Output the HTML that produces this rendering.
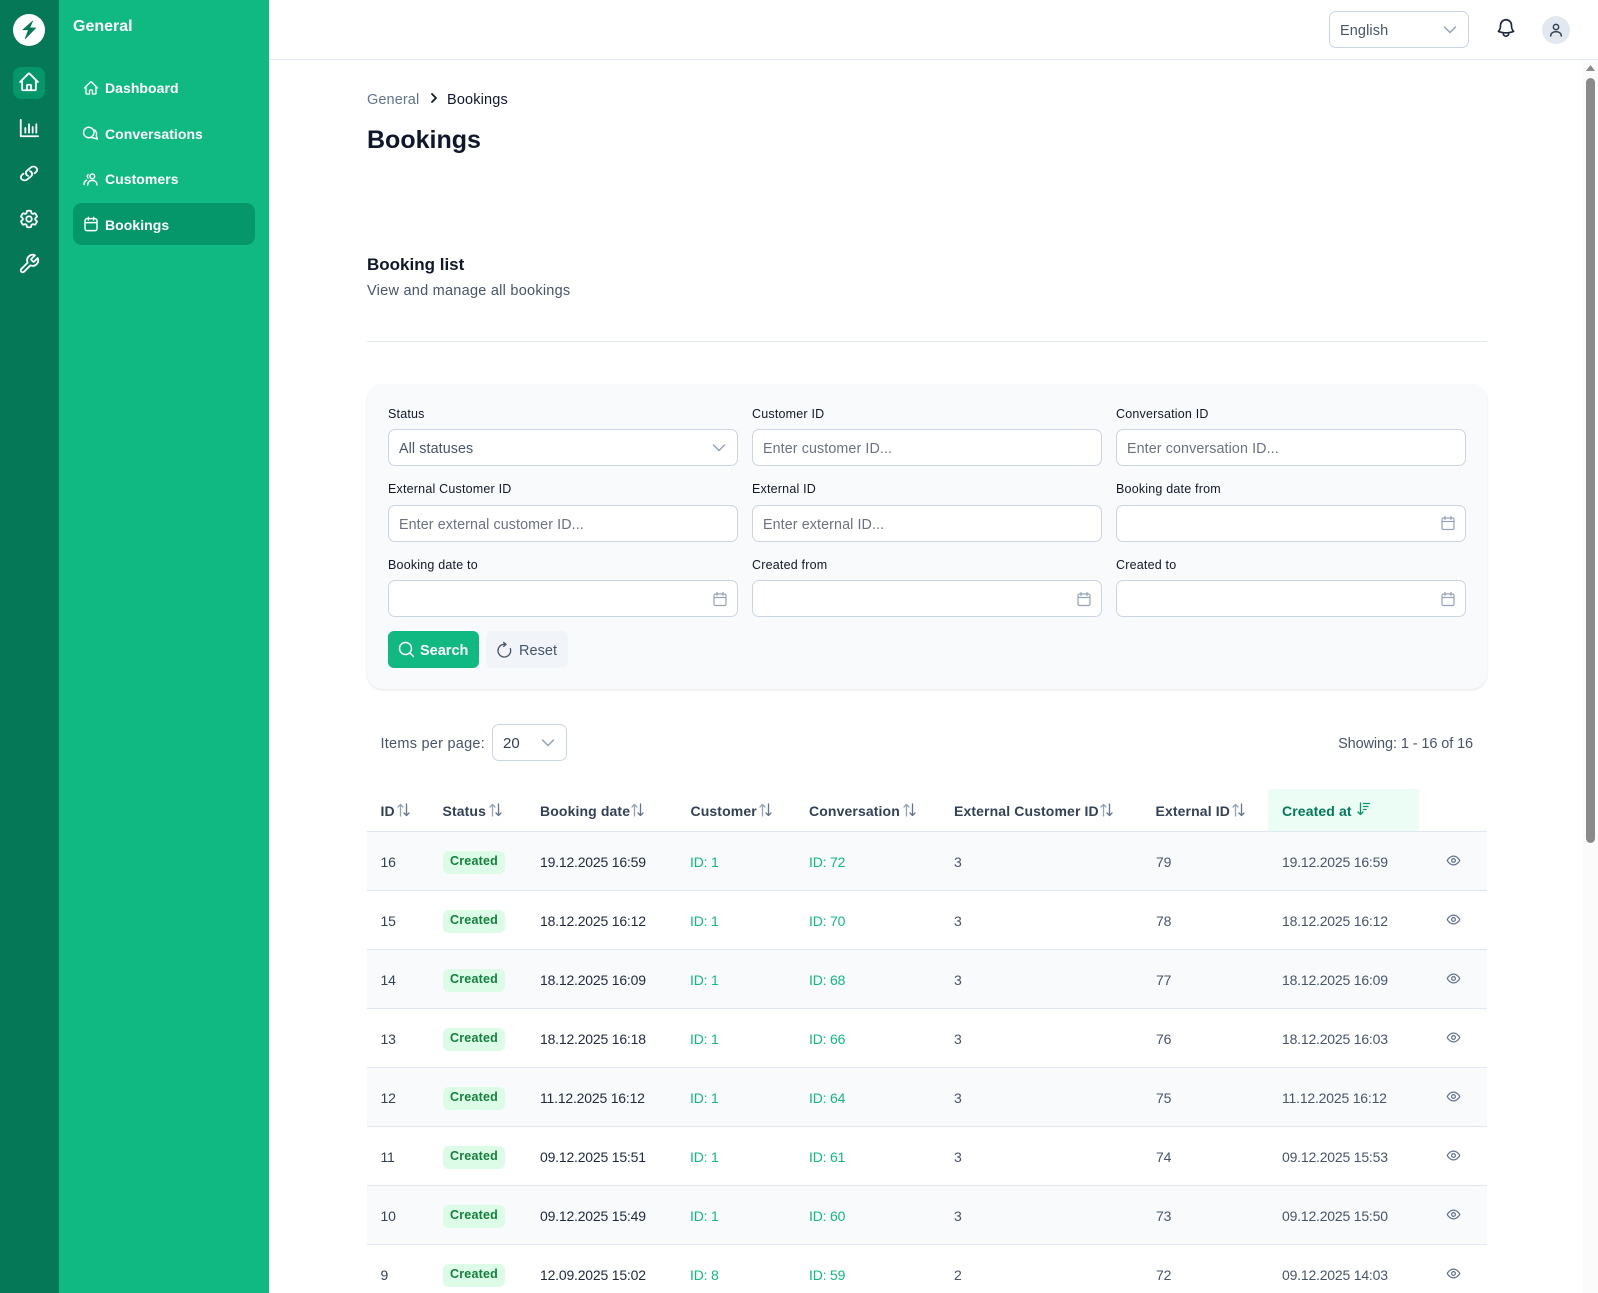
<!DOCTYPE html>
<html lang="en"><head><meta charset="utf-8"><title>Bookings</title>
<style>
*{box-sizing:border-box}
html,body{margin:0;padding:0;width:1598px;height:1293px;overflow:hidden;background:#fff;font-family:"Liberation Sans",sans-serif;color:#111827}
body{position:relative}
.a{position:absolute}
.t{position:absolute;white-space:nowrap;line-height:20px;height:20px}
svg{position:absolute;display:block;overflow:visible;fill:none;stroke:currentColor;stroke-linecap:round;stroke-linejoin:round}
.nav{color:#fff;font-size:14px;font-weight:700;left:105px;letter-spacing:.05px}
.lab{font-size:12.5px;color:#111827;letter-spacing:.2px}
.inp{position:absolute;width:350px;height:37px;background:#fff;border:1px solid #cbd5e1;border-radius:7px}
.ph{font-size:14.3px;color:#6b7280;letter-spacing:.1px}
.c1{left:388px}.c2{left:752px}.c3{left:1116px}
.h{font-size:14px;font-weight:700;color:#334155;letter-spacing:.12px}
.row{position:absolute;left:367px;width:1120px;height:59px;border-bottom:1.5px solid #e2e8f0}
.odd{background:#f8fafc}
.row .t{top:20px;font-size:14px;color:#475569;letter-spacing:-.2px}
.row .d{color:#1e293b}
.row .i{color:#334155}
.row .g{color:#10b981}
.b{position:absolute;left:76px;top:19px;width:62px;height:23px;background:#dcfce7;border-radius:6px;color:#15803d;font-size:12.5px;font-weight:700;text-align:center;line-height:21px;letter-spacing:.2px}
.i{left:13.5px}.d{left:173px}.cu{left:323px}.co{left:442px}.e{left:587px}.x{left:789px}.r{left:915px}
.cal{color:#94a3b8}
</style></head><body>

<!-- rail -->
<div class="a" style="left:0;top:0;width:59px;height:1293px;background:#047857"></div>
<div class="a" style="left:59px;top:0;width:210px;height:1293px;background:#10b981"></div>
<div class="a" style="left:13px;top:13.5px;width:32px;height:32px;border-radius:50%;background:#fff"></div>
<svg class="a" style="left:17px;top:18px" width="24" height="24" viewBox="0 0 24 24"><path d="M15.7 3 5.7 11.8H11.5L8 21 18.8 9.900H12.800Z" fill="#047857" stroke="#047857" stroke-width=".6"/></svg>
<div class="a" style="left:13px;top:67px;width:32px;height:32px;border-radius:8px;background:#059669"></div>
<svg style="left:18px;top:71px;color:#fff" width="22" height="22" viewBox="0 0 24 24" stroke-width="2"><path d="M2.25 12l8.954-8.955c.44-.439 1.152-.439 1.591 0L21.75 12M4.5 9.75v10.125c0 .621.504 1.125 1.125 1.125H9.75v-4.875c0-.621.504-1.125 1.125-1.125h2.25c.621 0 1.125.504 1.125 1.125V21h4.125c.621 0 1.125-.504 1.125-1.125V9.75M8.25 21h8.25"/></svg>
<svg style="left:18px;top:117px;color:#fff" width="22" height="22" viewBox="0 0 24 24" stroke-width="2"><path d="M3 3v18h19M8 17v-5M12 17V8M16 17v-6M20 17V8"/></svg>
<svg style="left:19px;top:165px;color:#fff" width="20" height="17" viewBox="0 0 24 24" preserveAspectRatio="none" stroke-width="2.300"><path d="M13.19 8.688a4.5 4.5 0 0 1 1.242 7.244l-4.5 4.5a4.5 4.5 0 0 1-6.364-6.364l1.757-1.757m13.35-.622 1.757-1.757a4.5 4.5 0 0 0-6.364-6.364l-4.5 4.5a4.5 4.5 0 0 0 1.242 7.244"/></svg>
<svg style="left:18px;top:208px;color:#fff" width="22" height="22" viewBox="0 0 24 24" stroke-width="2"><path d="M9.594 3.94c.09-.542.56-.94 1.11-.94h2.593c.55 0 1.02.398 1.11.94l.213 1.281c.063.374.313.686.645.87.074.04.147.083.22.127.325.196.72.257 1.075.124l1.217-.456a1.125 1.125 0 0 1 1.37.49l1.296 2.247a1.125 1.125 0 0 1-.26 1.431l-1.003.827c-.293.241-.438.613-.43.992a7.723 7.723 0 0 1 0 .255c-.008.378.137.75.43.991l1.004.827c.424.35.534.955.26 1.43l-1.298 2.247a1.125 1.125 0 0 1-1.369.491l-1.217-.456c-.355-.133-.75-.072-1.076.124a6.47 6.47 0 0 1-.22.128c-.331.183-.581.495-.644.869l-.213 1.281c-.09.543-.56.94-1.11.94h-2.594c-.55 0-1.019-.398-1.11-.94l-.213-1.281c-.062-.374-.312-.686-.644-.87a6.52 6.52 0 0 1-.22-.127c-.325-.196-.72-.257-1.076-.124l-1.217.456a1.125 1.125 0 0 1-1.369-.49l-1.297-2.247a1.125 1.125 0 0 1 .26-1.431l1.004-.827c.292-.24.437-.613.43-.991a6.932 6.932 0 0 1 0-.255c.007-.38-.138-.751-.43-.992l-1.004-.827a1.125 1.125 0 0 1-.26-1.43l1.297-2.247a1.125 1.125 0 0 1 1.37-.491l1.216.456c.356.133.751.072 1.076-.124.072-.044.146-.086.22-.128.332-.183.582-.495.644-.869l.214-1.28Z"/><path d="M15 12a3 3 0 1 1-6 0 3 3 0 0 1 6 0Z"/></svg>
<svg style="left:18px;top:253px;color:#fff" width="22" height="22" viewBox="0 0 24 24" stroke-width="2"><path d="M14.7 6.3a1 1 0 0 0 0 1.4l1.6 1.6a1 1 0 0 0 1.4 0l3.77-3.77a6 6 0 0 1-7.94 7.94l-6.91 6.91a2.12 2.12 0 0 1-3-3l6.91-6.91a6 6 0 0 1 7.94-7.94l-3.76 3.76z"/></svg>

<!-- nav -->
<div class="t" style="left:73px;top:17px;color:#fff;font-size:16px;font-weight:700">General</div>
<div class="a" style="left:73px;top:203px;width:182px;height:42px;border-radius:9px;background:#059669"></div>
<svg style="left:83px;top:80px;color:#fff" width="16" height="16" viewBox="0 0 24 24" stroke-width="2"><path d="M2.25 12l8.954-8.955c.44-.439 1.152-.439 1.591 0L21.75 12M4.5 9.750v10.125c0 .621.504 1.125 1.125 1.125H9.750v-4.875c0-.621.504-1.125 1.125-1.125h2.250c.621 0 1.125.504 1.125 1.125V21h4.125c.621 0 1.125-.504 1.125-1.125V9.750"/></svg>
<svg style="left:83px;top:125px;color:#fff" width="16" height="16" viewBox="0 0 24 24" stroke-width="2.200"><path d="M15.500 15A7.800 7.800 0 1 0 11.500 18.500"/><path d="M17.500 7.500C20 9.500 21 13 20 16l1.500 5-9.500-2.500"/><path d="M11.500 18.500C13 18 14.500 16.500 15.500 15"/></svg>
<svg style="left:83px;top:171px;color:#fff" width="16" height="16" viewBox="0 0 24 24" stroke-width="2.200"><circle cx="14" cy="8" r="3.500"/><path d="M7 21c0-4 3-7 7-7s7 3 7 7M1.500 20c0-3 1.500-5 4-6M7.500 5.500a3.500 3.500 0 0 0 0 5"/></svg>
<svg style="left:83px;top:216px;color:#fff" width="16" height="16" viewBox="0 0 24 24" stroke-width="2.200"><rect x="3" y="4" width="18" height="18" rx="3"/><path d="M8 2v4M16 2v4M3 10h18"/></svg>
<div class="t nav" style="top:78px">Dashboard</div>
<div class="t nav" style="top:124px">Conversations</div>
<div class="t nav" style="top:169px">Customers</div>
<div class="t nav" style="top:215px">Bookings</div>

<!-- header -->
<div class="a" style="left:269px;top:59px;width:1329px;height:1px;background:#e2e8f0"></div>
<div class="a" style="left:1329px;top:11px;width:140px;height:37px;border:1px solid #cbd5e1;border-radius:7px;background:#fff"></div>
<div class="t" style="left:1340px;top:21px;font-size:14.5px;color:#475569;letter-spacing:.1px">English</div>
<svg style="left:1443px;top:23px;color:#94a3b8" width="14" height="14" viewBox="0 0 14 14" stroke-width="1.500"><path d="M1.500 4 7 9.500 12.500 4"/></svg>
<svg style="left:1495px;top:17px;color:#1e293b" width="22" height="22" viewBox="0 0 24 24" stroke-width="1.800"><path d="M14.857 17.082a23.848 23.848 0 0 0 5.454-1.31A8.967 8.967 0 0 1 18 9.750V9A6 6 0 0 0 6 9v.75a8.967 8.967 0 0 1-2.312 6.022c1.733.64 3.56 1.085 5.455 1.310m5.714 0a24.255 24.255 0 0 1-5.714 0m5.714 0a3 3 0 1 1-5.714 0"/></svg>
<div class="a" style="left:1542px;top:16px;width:28px;height:28px;border-radius:50%;background:#e2e8f0"></div>
<svg style="left:1548px;top:22px;color:#334155" width="16" height="16" viewBox="0 0 24 24" stroke-width="2.200"><circle cx="12" cy="7.500" r="4"/><path d="M4 21c0-4 3.500-6.500 8-6.500s8 2.500 8 6.500"/></svg>

<!-- scrollbar -->
<div class="a" style="left:1583px;top:60px;width:15px;height:1233px;background:#fbfbfb"></div>
<div class="a" style="left:1586px;top:78px;width:9px;height:765px;background:#8a8a8a;border-radius:5px"></div>
<svg class="a" style="left:1586px;top:65px" width="9" height="7" viewBox="0 0 9 7"><path d="M4.500 0 9 6H0z" fill="#8a8a8a" stroke="none"/></svg>

<!-- titles -->
<div class="t" style="left:367px;top:90px;font-size:14.5px;color:#64748b;letter-spacing:.1px">General</div>
<svg style="left:429px;top:92px;color:#0f172a" width="10" height="12" viewBox="0 0 10 12" stroke-width="1.800"><path d="M3 2l4 4-4 4"/></svg>
<div class="t" style="left:447px;top:90px;font-size:14.5px;color:#0f172a;letter-spacing:.15px">Bookings</div>
<div class="t" style="left:367px;top:130px;font-size:25px;font-weight:700;color:#0f172a">Bookings</div>
<div class="t" style="left:367px;top:254.500px;font-size:17px;font-weight:700;color:#0f172a">Booking list</div>
<div class="t" style="left:367px;top:281px;font-size:14.5px;color:#475569;letter-spacing:.25px">View and manage all bookings</div>
<div class="a" style="left:367px;top:341px;width:1120px;height:1px;background:#e2e8f0"></div>

<!-- filter card -->
<div class="a" style="left:367px;top:384px;width:1120px;height:305px;background:#f8fafc;border-radius:16px;box-shadow:0 1px 2px rgba(15,23,42,.12)"></div>
<div class="t lab c1" style="top:404px">Status</div>
<div class="t lab c2" style="top:404px">Customer ID</div>
<div class="t lab c3" style="top:404px">Conversation ID</div>
<div class="t lab c1" style="top:479px">External Customer ID</div>
<div class="t lab c2" style="top:479px">External ID</div>
<div class="t lab c3" style="top:479px">Booking date from</div>
<div class="t lab c1" style="top:555px">Booking date to</div>
<div class="t lab c2" style="top:555px">Created from</div>
<div class="t lab c3" style="top:555px">Created to</div>

<div class="inp c1" style="top:429px"></div><div class="inp c2" style="top:429px"></div><div class="inp c3" style="top:429px"></div>
<div class="inp c1" style="top:505px"></div><div class="inp c2" style="top:505px"></div><div class="inp c3" style="top:505px"></div>
<div class="inp c1" style="top:580px"></div><div class="inp c2" style="top:580px"></div><div class="inp c3" style="top:580px"></div>

<div class="t ph" style="left:399px;top:438.500px;color:#475569">All statuses</div>
<svg style="left:712px;top:441px;color:#94a3b8" width="14" height="14" viewBox="0 0 14 14" stroke-width="1.500"><path d="M1.500 4 7 9.500 12.500 4"/></svg>
<div class="t ph" style="left:763px;top:438.500px">Enter customer ID...</div>
<div class="t ph" style="left:1127px;top:438.500px">Enter conversation ID...</div>
<div class="t ph" style="left:399px;top:514.500px">Enter external customer ID...</div>
<div class="t ph" style="left:763px;top:514.500px">Enter external ID...</div>

<svg class="cal" style="left:1441px;top:516px" width="14" height="14" viewBox="0 0 14 14" stroke-width="1.200"><rect x="1" y="2" width="12" height="11.500" rx="1.500"/><path d="M4 .5v3M10 .5v3M1 5.500h12"/></svg>
<svg class="cal" style="left:713px;top:592px" width="14" height="14" viewBox="0 0 14 14" stroke-width="1.200"><rect x="1" y="2" width="12" height="11.500" rx="1.500"/><path d="M4 .5v3M10 .5v3M1 5.500h12"/></svg>
<svg class="cal" style="left:1077px;top:592px" width="14" height="14" viewBox="0 0 14 14" stroke-width="1.200"><rect x="1" y="2" width="12" height="11.500" rx="1.500"/><path d="M4 .5v3M10 .5v3M1 5.500h12"/></svg>
<svg class="cal" style="left:1441px;top:592px" width="14" height="14" viewBox="0 0 14 14" stroke-width="1.200"><rect x="1" y="2" width="12" height="11.500" rx="1.500"/><path d="M4 .5v3M10 .5v3M1 5.500h12"/></svg>

<div class="a" style="left:388px;top:631px;width:91px;height:37px;border-radius:6px;background:#10b981"></div>
<svg style="left:398px;top:641px;color:#fff" width="17" height="17" viewBox="0 0 17 17" stroke-width="1.500"><circle cx="7.500" cy="7.500" r="6"/><path d="M12 12l3.500 3.500"/></svg>
<div class="t" style="left:420px;top:641px;font-size:14.5px;font-weight:700;color:#fff">Search</div>
<div class="a" style="left:486px;top:631px;width:82px;height:37px;border-radius:6px;background:#f1f5f9"></div>
<svg style="left:497px;top:642px;color:#475569" width="16" height="16" viewBox="0 0 24 24" stroke-width="2"><path d="M10 .5l3.500 3-3.500 3"/><path d="M13 3.500H11A9.500 9.500 0 1 0 20 10"/></svg>
<div class="t" style="left:519px;top:641px;font-size:14.5px;color:#475569;letter-spacing:.05px">Reset</div>

<!-- items bar -->
<div class="t" style="left:380.500px;top:734px;font-size:14.5px;color:#475569;letter-spacing:.25px">Items per page:</div>
<div class="a" style="left:492px;top:724px;width:75px;height:37px;border:1px solid #cbd5e1;border-radius:7px;background:#fff"></div>
<div class="t" style="left:503px;top:734px;font-size:15px;color:#334155">20</div>
<svg style="left:541px;top:736px;color:#94a3b8" width="14" height="14" viewBox="0 0 14 14" stroke-width="1.500"><path d="M1.500 4 7 9.500 12.500 4"/></svg>
<div class="t" style="right:125px;top:734px;font-size:14.5px;color:#475569;letter-spacing:-.1px">Showing: 1 - 16 of 16</div>

<!-- table head -->
<div class="a" style="left:1268px;top:789px;width:151px;height:42px;background:#ecfdf5"></div>
<div class="t h" style="left:380.500px;top:801px">ID</div>
<div class="t h" style="left:442.500px;top:801px">Status</div>
<div class="t h" style="left:540px;top:801px">Booking date</div>
<div class="t h" style="left:690.500px;top:801px">Customer</div>
<div class="t h" style="left:809px;top:801px">Conversation</div>
<div class="t h" style="left:954px;top:801px">External Customer ID</div>
<div class="t h" style="left:1155.500px;top:801px">External ID</div>
<div class="t h" style="left:1282px;top:801px;color:#047857">Created at</div>
<svg style="left:397px;top:803px" width="13" height="14" viewBox="0 0 13 14" stroke-width="1.300"><path d="M3.500 13V1.500M1 4 3.500 1.500 6 4" stroke="#94a3b8"/><path d="M9.500 1v11.500M7 10l2.500 2.500L12 10" stroke="#64748b"/></svg>
<svg style="left:489px;top:803px" width="13" height="14" viewBox="0 0 13 14" stroke-width="1.300"><path d="M3.500 13V1.500M1 4 3.500 1.500 6 4" stroke="#94a3b8"/><path d="M9.500 1v11.500M7 10l2.500 2.500L12 10" stroke="#64748b"/></svg>
<svg style="left:631px;top:803px" width="13" height="14" viewBox="0 0 13 14" stroke-width="1.300"><path d="M3.500 13V1.500M1 4 3.500 1.500 6 4" stroke="#94a3b8"/><path d="M9.500 1v11.500M7 10l2.500 2.500L12 10" stroke="#64748b"/></svg>
<svg style="left:759px;top:803px" width="13" height="14" viewBox="0 0 13 14" stroke-width="1.300"><path d="M3.500 13V1.500M1 4 3.500 1.500 6 4" stroke="#94a3b8"/><path d="M9.500 1v11.500M7 10l2.500 2.500L12 10" stroke="#64748b"/></svg>
<svg style="left:903px;top:803px" width="13" height="14" viewBox="0 0 13 14" stroke-width="1.300"><path d="M3.500 13V1.500M1 4 3.500 1.500 6 4" stroke="#94a3b8"/><path d="M9.500 1v11.500M7 10l2.500 2.500L12 10" stroke="#64748b"/></svg>
<svg style="left:1100px;top:803px" width="13" height="14" viewBox="0 0 13 14" stroke-width="1.300"><path d="M3.500 13V1.500M1 4 3.500 1.500 6 4" stroke="#94a3b8"/><path d="M9.500 1v11.500M7 10l2.500 2.500L12 10" stroke="#64748b"/></svg>
<svg style="left:1232px;top:803px" width="13" height="14" viewBox="0 0 13 14" stroke-width="1.300"><path d="M3.500 13V1.500M1 4 3.500 1.500 6 4" stroke="#94a3b8"/><path d="M9.500 1v11.500M7 10l2.500 2.500L12 10" stroke="#64748b"/></svg>
<svg style="left:1357px;top:802px;color:#059669" width="14" height="14" viewBox="0 0 14 14" stroke-width="1.300"><path d="M3.500 1v11.500M1 10l2.500 2.500L6 10M6.500 1.500h6M6.500 4.500h4.500M6.500 7.500H9"/></svg>
<div class="a" style="left:367px;top:831px;width:1120px;height:1.500px;background:#e2e8f0"></div>

<!-- rows -->
<div class="row odd" style="top:832px"><span class="t i">16</span><span class="b">Created</span><span class="t d">19.12.2025 16:59</span><span class="t cu g">ID: 1</span><span class="t co g">ID: 72</span><span class="t e">3</span><span class="t x">79</span><span class="t r">19.12.2025 16:59</span><svg style="left:1079px;top:21px;color:#64748b" width="15" height="15" viewBox="0 0 24 24" stroke-width="2"><path d="M2 12s3.500-7 10-7 10 7 10 7-3.500 7-10 7-10-7-10-7z"/><circle cx="12" cy="12" r="3"/></svg></div>
<div class="row" style="top:891px"><span class="t i">15</span><span class="b">Created</span><span class="t d">18.12.2025 16:12</span><span class="t cu g">ID: 1</span><span class="t co g">ID: 70</span><span class="t e">3</span><span class="t x">78</span><span class="t r">18.12.2025 16:12</span><svg style="left:1079px;top:21px;color:#64748b" width="15" height="15" viewBox="0 0 24 24" stroke-width="2"><path d="M2 12s3.500-7 10-7 10 7 10 7-3.500 7-10 7-10-7-10-7z"/><circle cx="12" cy="12" r="3"/></svg></div>
<div class="row odd" style="top:950px"><span class="t i">14</span><span class="b">Created</span><span class="t d">18.12.2025 16:09</span><span class="t cu g">ID: 1</span><span class="t co g">ID: 68</span><span class="t e">3</span><span class="t x">77</span><span class="t r">18.12.2025 16:09</span><svg style="left:1079px;top:21px;color:#64748b" width="15" height="15" viewBox="0 0 24 24" stroke-width="2"><path d="M2 12s3.500-7 10-7 10 7 10 7-3.500 7-10 7-10-7-10-7z"/><circle cx="12" cy="12" r="3"/></svg></div>
<div class="row" style="top:1009px"><span class="t i">13</span><span class="b">Created</span><span class="t d">18.12.2025 16:18</span><span class="t cu g">ID: 1</span><span class="t co g">ID: 66</span><span class="t e">3</span><span class="t x">76</span><span class="t r">18.12.2025 16:03</span><svg style="left:1079px;top:21px;color:#64748b" width="15" height="15" viewBox="0 0 24 24" stroke-width="2"><path d="M2 12s3.500-7 10-7 10 7 10 7-3.500 7-10 7-10-7-10-7z"/><circle cx="12" cy="12" r="3"/></svg></div>
<div class="row odd" style="top:1068px"><span class="t i">12</span><span class="b">Created</span><span class="t d">11.12.2025 16:12</span><span class="t cu g">ID: 1</span><span class="t co g">ID: 64</span><span class="t e">3</span><span class="t x">75</span><span class="t r">11.12.2025 16:12</span><svg style="left:1079px;top:21px;color:#64748b" width="15" height="15" viewBox="0 0 24 24" stroke-width="2"><path d="M2 12s3.500-7 10-7 10 7 10 7-3.500 7-10 7-10-7-10-7z"/><circle cx="12" cy="12" r="3"/></svg></div>
<div class="row" style="top:1127px"><span class="t i">11</span><span class="b">Created</span><span class="t d">09.12.2025 15:51</span><span class="t cu g">ID: 1</span><span class="t co g">ID: 61</span><span class="t e">3</span><span class="t x">74</span><span class="t r">09.12.2025 15:53</span><svg style="left:1079px;top:21px;color:#64748b" width="15" height="15" viewBox="0 0 24 24" stroke-width="2"><path d="M2 12s3.500-7 10-7 10 7 10 7-3.500 7-10 7-10-7-10-7z"/><circle cx="12" cy="12" r="3"/></svg></div>
<div class="row odd" style="top:1186px"><span class="t i">10</span><span class="b">Created</span><span class="t d">09.12.2025 15:49</span><span class="t cu g">ID: 1</span><span class="t co g">ID: 60</span><span class="t e">3</span><span class="t x">73</span><span class="t r">09.12.2025 15:50</span><svg style="left:1079px;top:21px;color:#64748b" width="15" height="15" viewBox="0 0 24 24" stroke-width="2"><path d="M2 12s3.500-7 10-7 10 7 10 7-3.500 7-10 7-10-7-10-7z"/><circle cx="12" cy="12" r="3"/></svg></div>
<div class="row" style="top:1245px"><span class="t i">9</span><span class="b">Created</span><span class="t d">12.09.2025 15:02</span><span class="t cu g">ID: 8</span><span class="t co g">ID: 59</span><span class="t e">2</span><span class="t x">72</span><span class="t r">09.12.2025 14:03</span><svg style="left:1079px;top:21px;color:#64748b" width="15" height="15" viewBox="0 0 24 24" stroke-width="2"><path d="M2 12s3.500-7 10-7 10 7 10 7-3.500 7-10 7-10-7-10-7z"/><circle cx="12" cy="12" r="3"/></svg></div>

</body></html>
